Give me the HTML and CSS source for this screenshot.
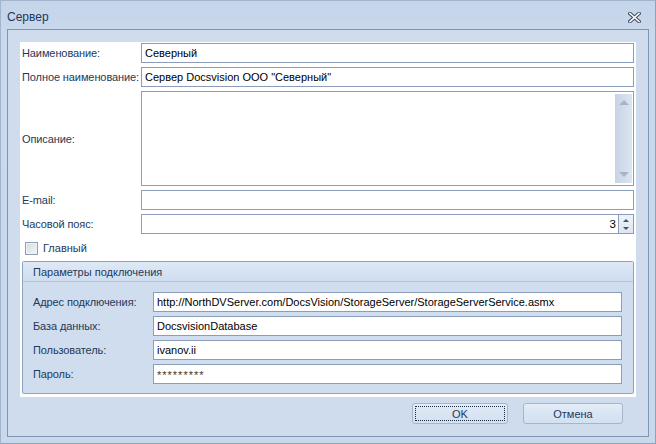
FILE: index.html
```html
<!DOCTYPE html>
<html lang="ru">
<head>
<meta charset="utf-8">
<title>Сервер</title>
<link rel="stylesheet" href="styles.css">
</head>
<body>
<div class="window">
  <div class="titlebar">
    <span class="title">Сервер</span>
    <span class="close">
      <svg width="13" height="11" viewBox="0 0 13 11">
        <path d="M2 1.5 L11 9.5 M11 1.5 L2 9.5" stroke="#3b4a5e" stroke-width="3.6" stroke-linecap="square"/>
        <path d="M2 1.5 L11 9.5 M11 1.5 L2 9.5" stroke="#ffffff" stroke-width="1.6" stroke-linecap="square"/>
      </svg>
    </span>
  </div>
  <div class="frame">
    <div class="panel">
      <div class="form">
        <div class="label">Наименование:</div>
        <div class="field">Северный</div>
        <div class="label">Полное наименование:</div>
        <div class="field">Сервер Docsvision ООО "Северный"</div>
        <div class="label">Описание:</div>
        <div class="field textarea">
          <div class="vscroll">
            <span class="arr up"></span>
            <span class="arr down"></span>
          </div>
        </div>
        <div class="label">E-mail:</div>
        <div class="field"></div>
        <div class="label">Часовой пояс:</div>
        <div class="field spin">
          <span class="spin-value">3</span>
          <span class="spin-btns">
            <span class="sarr sup"></span>
            <span class="sarr sdown"></span>
          </span>
        </div>
      </div>
      <div class="check-row">
        <span class="checkbox"></span>
        <span class="check-label">Главный</span>
      </div>
      <div class="group">
        <div class="group-head">Параметры подключения</div>
        <div class="group-body">
          <div class="label">Адрес подключения:</div>
          <div class="field">http://NorthDVServer.com/DocsVision/StorageServer/StorageServerService.asmx</div>
          <div class="label">База данных:</div>
          <div class="field">DocsvisionDatabase</div>
          <div class="label">Пользователь:</div>
          <div class="field">ivanov.ii</div>
          <div class="label">Пароль:</div>
          <div class="field pwd">*********</div>
        </div>
      </div>
    </div>
    <div class="buttons">
      <div class="btn ok"><span class="focus">OK</span></div>
      <div class="btn cancel">Отмена</div>
    </div>
  </div>
</div>
</body>
</html>
```

FILE: styles.css
```css
* { box-sizing: border-box; }
html, body { margin: 0; padding: 0; }
body {
  width: 656px;
  height: 444px;
  font-family: "Liberation Sans", Arial, sans-serif;
  font-size: 11px;
  color: #1e395b;
  background: #c7d7eb;
}
.window {
  width: 656px;
  height: 444px;
  display: flex;
  flex-direction: column;
  background: linear-gradient(#c4d5ea, #cbd9ec 40px, #c9d8eb);
  border: 1px solid #a3b5cc;
  border-right-color: #8fa3bf;
  border-bottom-color: #8fa3bf;
  padding: 0 6px 6px 6px;
}
.titlebar {
  height: 28px;
  display: flex;
  align-items: center;
  justify-content: space-between;
  padding-top: 3px;
}
.title {
  font-size: 12px;
  color: #1e395b;
}
.close {
  display: flex;
  margin-right: 8px;
  margin-top: 2px;
}
.frame {
  flex: 1;
  border: 1px solid #7f95b5;
  background: #cfdcee;
  padding: 12px 12px 0 12px;
  display: flex;
  flex-direction: column;
}
.panel {
  background: #ffffff;
  padding: 1px 2px 3px 2px;
  width: 616px;
}
.form {
  display: grid;
  grid-template-columns: 119px 1fr;
  grid-template-rows: 20px 20px 95px 20px 20px;
  row-gap: 4px;
}
.label {
  display: flex;
  align-items: center;
  white-space: nowrap;
  letter-spacing: -0.1px;
}
.field {
  border: 1px solid #8a9dbb;
  background: #fff;
  color: #000;
  height: 20px;
  padding: 0 3px;
  display: flex;
  align-items: center;
  white-space: nowrap;
  overflow: hidden;
}
.textarea {
  height: 95px;
  justify-content: flex-end;
  align-items: stretch;
  padding: 2px 1px 2px 0;
}
.vscroll {
  width: 17px;
  background: linear-gradient(90deg, #c6d4e7, #dce5f1);
  display: flex;
  flex-direction: column;
  justify-content: space-between;
  align-items: center;
  padding: 6px 0 6px 0;
}
.arr {
  width: 0; height: 0;
  border-left: 5px solid transparent;
  border-right: 5px solid transparent;
}
.arr.up { border-bottom: 5px solid #a8b5c6; }
.arr.down { border-top: 5px solid #a8b5c6; }
.spin {
  justify-content: flex-end;
  padding: 0;
}
.spin-value {
  padding-right: 2px;
  font-size: 11.5px;
}
.spin-btns {
  width: 15px;
  height: 18px;
  border-left: 1px solid #8a9dbb;
  background: linear-gradient(#eef3f9, #dde6f1);
  display: flex;
  flex-direction: column;
  justify-content: center;
  align-items: center;
  gap: 5px;
}
.sarr {
  width: 0; height: 0;
  border-left: 3px solid transparent;
  border-right: 3px solid transparent;
}
.sup { border-bottom: 3px solid #445468; }
.sdown { border-top: 3px solid #445468; }
.check-row {
  height: 20px;
  margin-top: 4px;
  display: flex;
  align-items: center;
  padding-left: 3px;
  gap: 5px;
}
.checkbox {
  width: 13px;
  height: 13px;
  border: 1px solid #8e9fb8;
  background: linear-gradient(135deg, #d6dbe2, #f4f6f8);
  box-shadow: inset 0 0 0 1px #eef1f5;
}
.check-label { color: #1e395b; }
.group {
  margin-top: 3px;
  border: 1px solid #8ea3c2;
  border-radius: 2px;
  background: #d0ddee;
}
.group-head {
  height: 20px;
  display: flex;
  align-items: center;
  padding-left: 10px;
  background: linear-gradient(#dfe9f6, #cfddf0);
  border-bottom: 1px solid #b3c5dd;
}
.group-body {
  display: grid;
  grid-template-columns: 120px 469px;
  grid-auto-rows: 20px;
  row-gap: 4px;
  padding: 10px 0 9px 10px;
}
.pwd {
  color: #4a3414;
  letter-spacing: 1px;
  font-size: 11px;
  padding-top: 1px;
}
.buttons {
  display: flex;
  justify-content: flex-end;
  gap: 15px;
  padding-top: 6px;
  padding-right: 13px;
}
.btn {
  height: 21px;
  border: 1px solid #a5b6cc;
  border-radius: 3px;
  background: linear-gradient(#e4edf8, #d9e5f3 50%, #d3e0f1);
  color: #1e395b;
  display: flex;
  align-items: center;
  justify-content: center;
}
.ok { width: 96px; padding: 2px; }
.cancel { width: 100px; }
.focus {
  flex: 1;
  height: 100%;
  border: 1px dotted #1c2b40;
  display: flex;
  align-items: center;
  justify-content: center;
}
```
